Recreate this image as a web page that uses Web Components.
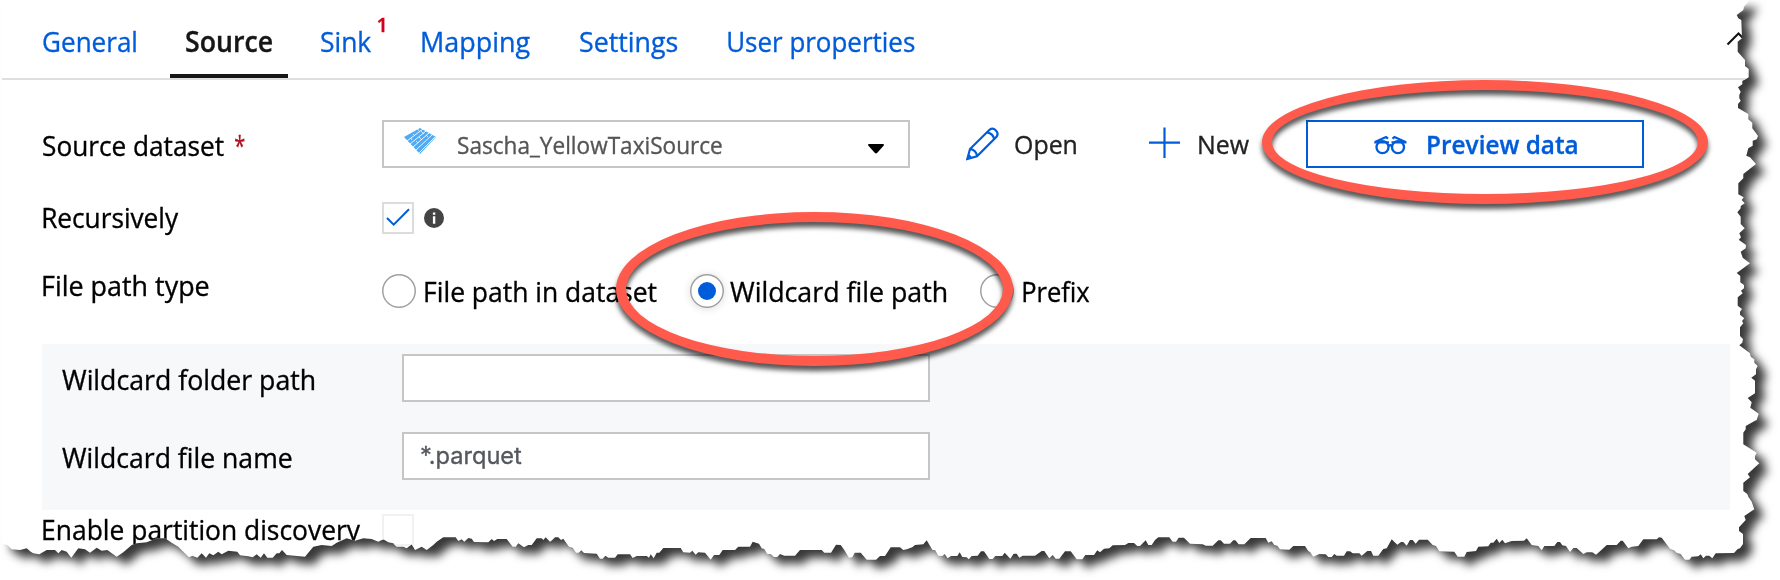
<!DOCTYPE html>
<html lang="en"><head><meta charset="utf-8"><title>Copy activity - Source</title>
<style>body{margin:0;background:#fff;font-family:"Open Sans","Noto Sans",sans-serif;font-size:28px;color:#000;overflow:hidden}</style>
</head><body>
<source-page></source-page>
<script>
const define=(name,html,init)=>{
  const t=document.createElement('template');t.innerHTML=html;
  customElements.define(name,class extends HTMLElement{
    connectedCallback(){
      if(this.shadowRoot)return;
      this.attachShadow({mode:'open'}).append(t.content.cloneNode(true));
      if(init)init.call(this,this.shadowRoot);
    }
  });
};
const ctx=document.createElement('canvas').getContext('2d');

/* A single line of text condensed to the width in its "w" attribute */
define('fit-text',`<style>:host{display:block;white-space:pre;flex:none}span{display:block;width:max-content;transform-origin:0 0;-webkit-text-stroke:.35px currentColor}</style><span><slot></slot></span>`,function(r){
  const s=getComputedStyle(this);
  ctx.font=s.fontWeight+' '+s.fontSize+' '+s.fontFamily;
  const m=ctx.measureText(this.textContent),w=+this.getAttribute('w');
  const k=w/(m.actualBoundingBoxLeft+m.actualBoundingBoxRight);
  this.style.width=w+'px';
  r.querySelector('span').style.transform='translateX('+(m.actualBoundingBoxLeft*k)+'px) scaleX('+k+')';
});

define('tab-item',`<style>:host{display:block;position:relative;box-sizing:border-box;height:78px;padding:21px 16px 0;line-height:40px;color:#015cda}
:host([selected]){color:#161616;font-weight:600;border-bottom:4px solid #161616}
::slotted([slot=badge]){position:absolute;right:4px;top:11px;font-size:20px;line-height:28px;font-weight:600;color:#d0021b}</style><slot></slot><slot name="badge"></slot>`);

define('tab-strip',`<style>:host{display:flex;height:78px;margin-left:2px;padding-left:25px;border-bottom:2px solid #dfdfdf}
.end{margin-left:auto;padding:31px 28.5px 0 0}svg{display:block}</style><slot></slot><div class="end"><svg width="26" height="16" viewBox="0 0 26 16" fill="none" stroke="#111" stroke-width="2"><path d="M1.5 13.5 12.5 2.5 23.5 13.5"/></svg></div>`);

define('form-row',`<style>:host{display:grid;grid-template-columns:var(--label,339px) auto;justify-content:start;height:var(--h,32px);line-height:var(--h,32px)}
.l{display:flex;gap:11px;margin-top:var(--shift,0px)}.c{display:flex}</style><div class="l"><slot name="label"></slot></div><div class="c"><slot></slot></div>`);

define('check-box',`<style>:host{display:block;box-sizing:border-box;width:32px;height:32px;border:2px solid #dcdcdc}:host([faint]){border-color:#f1f1f1}
svg{display:none}:host([checked]) svg{display:block}</style><svg width="28" height="28" viewBox="0 0 28 28" fill="none" stroke="#015cda" stroke-width="2"><path d="M3 14 9.7 20.7 25 5.2"/></svg>`);

define('info-dot',`<style>:host{display:block;margin:6px 0 0 10px}svg{display:block}</style><svg width="20" height="20" viewBox="0 0 20 20"><circle cx="10" cy="10" r="10" fill="#444"/><path d="M8.9 4.4h2.4v2.3H8.9zM8.9 8.2h2.4v7.6H8.9z" fill="#fff"/></svg>`);

define('radio-option',`<style>:host{display:flex;gap:9px}
i{box-sizing:border-box;width:34px;height:34px;border-radius:50%;background:#fff;display:grid;place-items:center;box-shadow:inset 0 0 0 1.5px #a0a0a0}
:host([checked]) i{box-shadow:inset 0 0 0 1.5px #a0a0a0,0 1px 9px #0002}
:host([checked]) i::after{content:"";width:18px;height:18px;border-radius:50%;background:#015cda}</style><i></i><slot></slot>`);

define('text-input',`<style>:host{display:block;box-sizing:border-box;width:528px;height:48px;border:2px solid #c6c6c6;background:#fff;padding-left:17px;font:24px/43px Inter,sans-serif;color:#54585d}</style><slot></slot>`);

define('data-select',`<style>:host{display:flex;box-sizing:border-box;width:528px;height:48px;border:2px solid #c6c6c6;background:#fff;padding:0 24px 0 20px;font-size:24.5px;line-height:45px;color:#555}
svg{display:block}.d{margin:6px 22px 0 0}.a{margin:21.5px 0 0 auto}</style>
<svg class="d" width="32" height="26" viewBox="0 0 32 26"><path d="M16 0 32 9 16 26 0 9Z" fill="#50aaf4"/><g stroke="#fff" stroke-width=".9" fill="none"><path d="M3 13 19 1M6 16 22 3M9 19 25 5M12 22 28 7M15 25 31 9"/><path d="M13 0 15 3M17 3 20 6M9 6 11 8M15 9 18 12M7 10 8 12M22 7 24 9M12 13 14 15" stroke-width=".7"/></g></svg>
<slot></slot><svg class="a" width="16" height="10" viewBox="0 0 16 10"><path d="M1 0H15Q16 0 16 1.2L9.3 8.8Q8 10 6.7 8.8L0 1.2Q0 0 1 0Z"/></svg>`);

define('icon-action',`<style>:host{display:flex;font-size:26px;line-height:48px;color:#222}svg{display:none}
:host([icon=edit]) .e{display:block;margin:7px 16px 0 0}:host([icon=add]) .p{display:block;margin:7px 19px 0 0}</style>
<svg class="e" width="33" height="34" viewBox="0 0 33 34" fill="none" stroke="#015cda" stroke-width="2.2"><path d="M1.3 32 4 22 23.5 2.8C28 -.5 33.7 5.5 30.5 9.8L11 29.2ZM4 22C8 22.5 10.5 25 11 29.2M21 5.3C25 6 27.5 8.5 28.2 12.3M2.5 28 5.2 30.8"/></svg>
<svg class="p" width="31" height="31" viewBox="0 0 31 31" stroke="#015cda" stroke-width="2.2"><path d="M15.5 .5V31M0 15.7H31"/></svg><slot></slot>`);

define('preview-button',`<style>:host{display:flex;box-sizing:border-box;width:338px;height:48px;border:2px solid #015cda;padding-left:66px;font-size:25.5px;font-weight:600;line-height:44.5px;color:#015cda}
svg{display:block;margin:13px 21px 0 0}</style><svg width="33" height="20" viewBox="0 0 33 20" fill="none" stroke="#015cda" stroke-width="2.3"><circle cx="8.5" cy="12.2" r="6"/><circle cx="24" cy="12.2" r="6"/><path d="M14.5 11Q16.2 9.4 18 11M.3 7.4H15M17.5 7.4H32.5M1 7 12 2 14 3.6M31.5 7 20.5 2 18.5 3.6"/></svg><slot></slot>`);

define('sub-panel',`<style>:host{display:grid;gap:30px;align-content:start;box-sizing:border-box;width:1688px;height:166px;margin:36px 0 4px 42px;padding:10px 0 0 20px;background:#f7f8fa;--h:48px}</style><slot></slot>`);

/* Hand-drawn style ring that is laid over the form */
define('ring-mark',`<style>:host{position:absolute;box-sizing:border-box;border:10px solid #ff5a4c;border-radius:50%;filter:drop-shadow(0 5px 2.5px #000a)}</style>`);

/* Sheet with a torn right and bottom edge; points are thirds of a pixel from each origin */
const torn=(x,y,s)=>s.split(' ').map(p=>{const [a,b]=p.split(',').map(Number);return [x+a/3,y+b/3]});
const right=[
...torn(1660,0,'262,8 252,20 250,30 230,45 235,55 244,60 246,115 233,125 233,155 255,180 255,198 266,207 266,232 247,243 247,253 234,262 242,275 238,285 238,295 242,302 234,312 234,324 265,342 265,358 277,368 277,385 287,398 294,408 290,418 278,422 278,437 265,445 259,467 270,472 288,492 250,522 250,535 235,550 235,583 251,592 245,600 254,610 242,618 242,625 232,637 242,650 242,672 254,685 238,700 243,712 236,720'),
...torn(1660,240,'237,0 258,15 257,25 242,35 248,53 270,70 230,99 241,108 241,127 252,135 252,145 243,152 248,160 233,172 233,197 246,207 240,215 240,224 253,235 246,243 250,250 240,262 240,288 249,297 247,308 238,316 270,340 272,350 283,358 283,368 293,378 288,388 288,403 274,413 285,422 285,460 263,474 275,487 271,503 296,521 290,540')];
const bottom=[
...torn(0,320,'12,672 22,675 35,688 60,690 80,685 92,695 100,700 118,703 140,690 165,690 175,700 185,690 200,695 214,713 235,685 255,688 270,698 290,683 305,692 322,690 350,710 370,697 395,675 410,670 440,667 470,655 495,655 515,668 535,680 550,695 567,712 577,707 592,713 605,700 618,713 628,700 640,706 655,695 665,703 685,692 712,695 720,706 745,709 758,712 770,703 782,713 792,700 802,713 818,713 830,700 838,700 846,690 860,705 915,710 940,680 965,675 995,678 1010,668 1040,655 1065,662 1090,655 1115,657 1135,665 1150,658 1165,667 1180,670 1190,680 1210,680 1220,685 1235,673 1245,690 1265,680 1280,690 1300,675 1310,665 1330,652'),
...torn(450,420,'0,352 17,352 25,363 35,358 43,365 55,354 65,356 72,366 115,367 125,357 132,363 142,357 170,357 188,380 197,380 205,370 222,382 235,375 245,375 260,355 275,355 280,360 287,352 300,365 307,360 315,352 325,352 333,360 340,356 357,380 368,383 378,398 386,398 394,391 402,399 440,401 450,416 458,416 466,407 475,413 495,413 503,403 540,403 548,414 560,408 590,408 597,413 602,403 611,415 620,398 628,398 640,384 692,384 700,397 720,398 727,392 737,404 745,397 765,398 782,419 792,405 808,405 818,390 855,390 865,380 900,380 908,365 927,371 935,385 943,387 952,402 962,402 972,411 982,411 990,402 1003,407 1035,407 1050,390 1115,390 1123,398 1143,398 1158,374 1172,375 1183,390 1197,413 1207,412 1214,398 1232,398 1250,419 1278,419'),
...torn(880,420,'0,408 15,408 32,382 60,382 70,390 80,388 97,382 105,375 130,373 140,361 157,389 166,391 175,407 187,408 194,402 203,415 213,408 232,408 239,397 247,411 260,412 266,418 275,408 293,407 303,394 312,394 328,417 338,417 346,408 367,408 374,398 391,416 401,401 410,401 418,413 428,407 465,407 485,393 493,393 508,415 518,405 527,416 538,416 555,394 572,394 590,418 607,418 616,405 642,405 652,391 660,397 672,386 688,385 698,376 735,375 745,369 762,369 772,378 780,378 797,361 805,375 815,375 825,360 835,352 868,352 878,365 888,365 896,353 912,353 930,371 968,373 978,377 998,377 1015,361 1022,361 1032,371 1050,371 1060,361 1066,361 1076,373 1093,373 1112,354 1157,354 1165,368 1175,364 1183,375 1192,377 1200,388 1228,389 1240,378 1275,378 1285,393'),
...torn(1310,420,'0,396 10,410 28,402 47,403 55,411 65,411 73,402 80,407 102,407 110,394 120,394 128,400 148,400 155,407 172,393 183,393 190,407 205,407 220,387 230,385 245,358 262,374 273,366 280,366 290,377 300,360 308,360 317,371 327,359 353,359 368,375 378,378 388,394 433,395 443,410 463,410 470,396 498,393 505,380 535,379 542,368 550,368 560,356 568,369 577,359 585,370 605,363 642,362 650,355 665,375 685,378 695,391 703,378 733,378 742,366 750,366 757,376 768,378 780,396 790,384 800,384 820,402 830,397 847,397 858,404 870,394 890,375 920,375 932,362 938,362 955,385 965,380 985,378 1000,358 1040,358 1047,352 1055,353 1080,386 1092,391 1100,398 1112,402 1125,419 1138,419 1145,410 1165,409 1172,403 1180,415 1188,407 1198,407 1207,415 1217,400 1272,399 1283,387 1290,385 1299,372 1299,342 1287,333 1287,322 1307,300 1303,288 1333,268 1325,245 1315,230 1312,222 1300,213 1300,188 1320,172 1313,162 1348,130 1335,118 1335,108 1340,98 1300,73 1300,38 1307,28 1307,18 1335,2')];
define('torn-sheet',`<style>:host{display:block;width:1780px;height:580px;filter:drop-shadow(9px 8px 5px rgba(0,0,0,.78))}.s{height:580px;background:#fff}</style><div class="s"><slot></slot></div>`,function(r){
  const pts=[[2,0],[1749,0],...right,...bottom.reverse(),[2,543]];
  r.querySelector('.s').style.clipPath='polygon('+pts.map(p=>p[0].toFixed(1)+'px '+p[1].toFixed(1)+'px').join(',')+')';
});

define('source-page',`<style>:host{display:block;position:relative;width:1780px;height:580px;overflow:hidden}
.ds{margin:40px 0 0 43px;--h:48px;--shift:1px}.rec{margin:34px 0 0 43px;--shift:-1px}.path{margin:40px 0 0 43px;--h:34px}
.path [slot]{margin-top:-6px}.in{--label:340px;--shift:1px}.epd{margin-left:43px;--shift:-1px}
.req{color:#b10e1e}</style>
<torn-sheet>
<tab-strip>
<tab-item><fit-text w="93">General</fit-text></tab-item>
<tab-item selected style="margin-left:18px"><fit-text w="86">Source</fit-text></tab-item>
<tab-item style="margin-left:17px;padding-right:17px"><fit-text w="50.5">Sink</fit-text><fit-text slot="badge" w="7">1</fit-text></tab-item>
<tab-item style="margin-left:17px"><fit-text w="108">Mapping</fit-text></tab-item>
<tab-item style="margin-left:18px"><fit-text w="98">Settings</fit-text></tab-item>
<tab-item style="margin-left:18px"><fit-text w="187">User properties</fit-text></tab-item>
</tab-strip>
<form-row class="ds"><fit-text slot="label" w="181">Source dataset</fit-text><fit-text slot="label" class="req" w="10">*</fit-text>
<data-select><fit-text w="264">Sascha_YellowTaxiSource</fit-text></data-select>
<icon-action icon="edit" style="margin-left:56px"><fit-text w="61">Open</fit-text></icon-action>
<icon-action icon="add" style="margin-left:73px"><fit-text w="50">New</fit-text></icon-action>
<preview-button style="margin-left:57px"><fit-text w="149">Preview data</fit-text></preview-button></form-row>
<form-row class="rec"><fit-text slot="label" w="136">Recursively</fit-text><check-box checked></check-box><info-dot></info-dot></form-row>
<form-row class="path"><fit-text slot="label" w="166">File path type</fit-text>
<radio-option><fit-text w="232">File path in dataset</fit-text></radio-option>
<radio-option checked style="margin-left:33px;gap:6px"><fit-text w="216">Wildcard file path</fit-text></radio-option>
<radio-option style="margin-left:34px"><fit-text w="67">Prefix</fit-text></radio-option></form-row>
<sub-panel>
<form-row class="in"><fit-text slot="label" w="252">Wildcard folder path</fit-text><text-input></text-input></form-row>
<form-row class="in"><fit-text slot="label" w="230">Wildcard file name</fit-text><text-input><fit-text w="101">*.parquet</fit-text></text-input></form-row>
</sub-panel>
<form-row class="epd"><fit-text slot="label" w="318">Enable partition discovery</fit-text><check-box faint></check-box></form-row>
</torn-sheet>
<ring-mark style="left:1262px;top:80px;width:446px;height:124px"></ring-mark>
<ring-mark style="left:616px;top:212px;width:397px;height:154px"></ring-mark>`);
</script></body></html>
